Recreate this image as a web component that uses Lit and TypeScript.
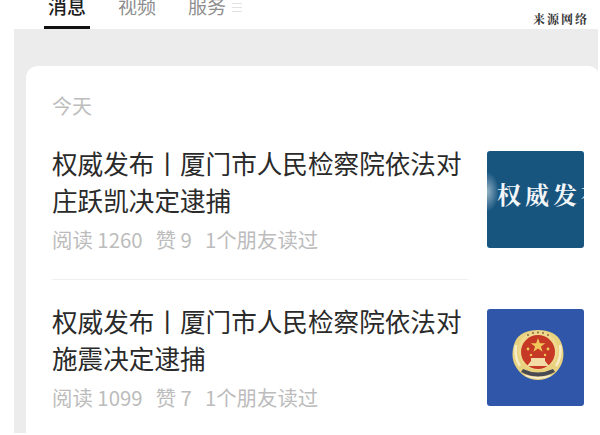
import { LitElement, html, css } from "lit";
import { customElement } from "lit/decorators.js";

@customElement("app-root")
export class AppRoot extends LitElement {
  static styles = css`
    :host { display: block; width: 600px; height: 435px; overflow: hidden; background: #fff; font-family: "Noto Sans CJK SC", "Noto Sans", sans-serif; }
    .header { height: 29px; display: flex; align-items: flex-end; padding-left: 44px; justify-content: space-between; overflow: hidden; }
    .tabs { display: flex; align-items: flex-end; height: 29px; }
    .tab { font-size: 19px; line-height: 26px; height: 36px; box-sizing: border-box; color: #8f8f8f; margin-right: 32px; margin-top: -7px; }
    .tab.active { color: #1e1e1e; font-weight: 500; width: 46px; text-align: center; border-bottom: 3px solid #111; margin-right: 28px; }
    .tab.svc { margin-right: 6px; }
    .lines { display: flex; flex-direction: column; gap: 3px; width: 10px; align-self: flex-start; margin-top: 3px; }
    .lines i { display: block; height: 1px; background: #e2e2e2; }
    .mark { font-family: "Noto Serif CJK SC", "Noto Sans CJK SC", serif; font-weight: 700; font-size: 12px; letter-spacing: 2px; color: #333; line-height: 16px; margin-right: 11px; align-self: flex-start; margin-top: 11px; }
    .band { margin-left: 14px; margin-right: 2px; height: 404px; background: #ececec; padding: 37px 0 0 12px; box-sizing: border-box; }
    .card { background: #fff; border-radius: 12px 12px 0 0; height: 367px; box-sizing: border-box; padding: 25px 0 0 26px; margin-right: -2px; }
    .today { font-size: 20px; line-height: 30px; color: #bdbdbd; }
    .row { display: flex; width: 532px; justify-content: space-between; }
    .first { margin-top: 25px; padding-bottom: 25px; }
    .second { margin-top: 24px; }
    .left { width: 420px; }
    .title { font-size: 25.6px; line-height: 37px; color: #2a2a2a; white-space: nowrap; margin-top: -2px; }
    .meta { font-size: 20.4px; line-height: 30px; color: #bcbcbc; white-space: nowrap; margin-top: 6px; display: flex; }
    .meta span { margin-right: 13px; }
    .rule { height: 1px; background: #f0f0f0; width: 416px; }
    .thumb { width: 97px; height: 97px; border-radius: 3px; flex: none; display: flex; align-items: center; justify-content: center; overflow: hidden; }
    .t1 { margin-top: 5px; color: #f3f6f8; font-family: "Noto Serif CJK SC", "Liberation Serif", serif; font-weight: 700; font-size: 24px; white-space: nowrap; justify-content: flex-start; padding: 0 0 12px 10px; box-sizing: border-box; letter-spacing: 4px;
      background: radial-gradient(ellipse 12px 20px at 0 42%, rgba(255,255,255,.55), transparent), #17557f; }
    .t2 { margin-top: 5px; background: #2f56a8; padding: 0 0 4px 5px; box-sizing: border-box; }
  `;

  render() {
    return html`
      <div class="header">
        <div class="tabs">
          <div class="tab active">消息</div>
          <div class="tab">视频</div>
          <div class="tab svc">服务</div>
          <div class="lines"><i></i><i></i><i></i></div>
        </div>
        <div class="mark">来源网络</div>
      </div>
      <div class="band">
        <div class="card">
          <div class="today">今天</div>
          <div class="row first">
            <div class="left">
              <div class="title">权威发布丨厦门市人民检察院依法对<br />庄跃凯决定逮捕</div>
              <div class="meta"><span>阅读 1260</span><span>赞 9</span><span>1个朋友读过</span></div>
            </div>
            <div class="thumb t1">权威发布</div>
          </div>
          <div class="rule"></div>
          <div class="row second">
            <div class="left">
              <div class="title">权威发布丨厦门市人民检察院依法对<br />施震决定逮捕</div>
              <div class="meta"><span>阅读 1099</span><span>赞 7</span><span>1个朋友读过</span></div>
            </div>
            <div class="thumb t2">
              <svg width="54" height="54" viewBox="0 0 54 54">
                <path d="M27 1C16 1 7 5 4 13 1 20 0 30 5 38c4 7 12 13 22 13s18-6 22-13c5-8 4-18 1-25C47 5 38 1 27 1z" fill="#e9d27e" />
                <path d="M5 16q-2 12 4 21M49 16q2 12-4 21" stroke="#f6edc8" stroke-width="2.5" fill="none" />
                <path d="M27 2C16 2 8 10 7 21c0 10 9 20 20 20s20-10 20-20C46 10 38 2 27 2z" fill="#efd98f" />
                <circle cx="27" cy="23" r="17" fill="#c63a25" />
                <g fill="#8a6a3a"><circle cx="17" cy="6" r="1" /><circle cx="22" cy="4" r="1" /><circle cx="27" cy="3.5" r="1" /><circle cx="32" cy="4" r="1" /><circle cx="37" cy="6" r="1" /></g>
                <path d="M27 9l1.8 5.2h5.5l-4.4 3.2 1.7 5.3-4.6-3.2-4.6 3.2 1.7-5.3-4.4-3.2h5.5z" fill="#f1c95a" />
                <circle cx="17" cy="20" r="1.4" fill="#f1c95a" />
                <circle cx="37" cy="20" r="1.4" fill="#f1c95a" />
                <circle cx="20" cy="26" r="1.2" fill="#f1c95a" />
                <circle cx="34" cy="26" r="1.2" fill="#f1c95a" />
                <path d="M20 29h14v3l4 5H16l4-5z" fill="#f3dca6" />
                <path d="M10 43q17 9 34 0l-2-3q-15 7-30 0z" fill="#4a4a55" />
                <path d="M14 47q13 6 26 0l-1-1q-12 4-24 0z" fill="#f6ecd2" />
              </svg>
            </div>
          </div>
        </div>
      </div>
    `;
  }
}
